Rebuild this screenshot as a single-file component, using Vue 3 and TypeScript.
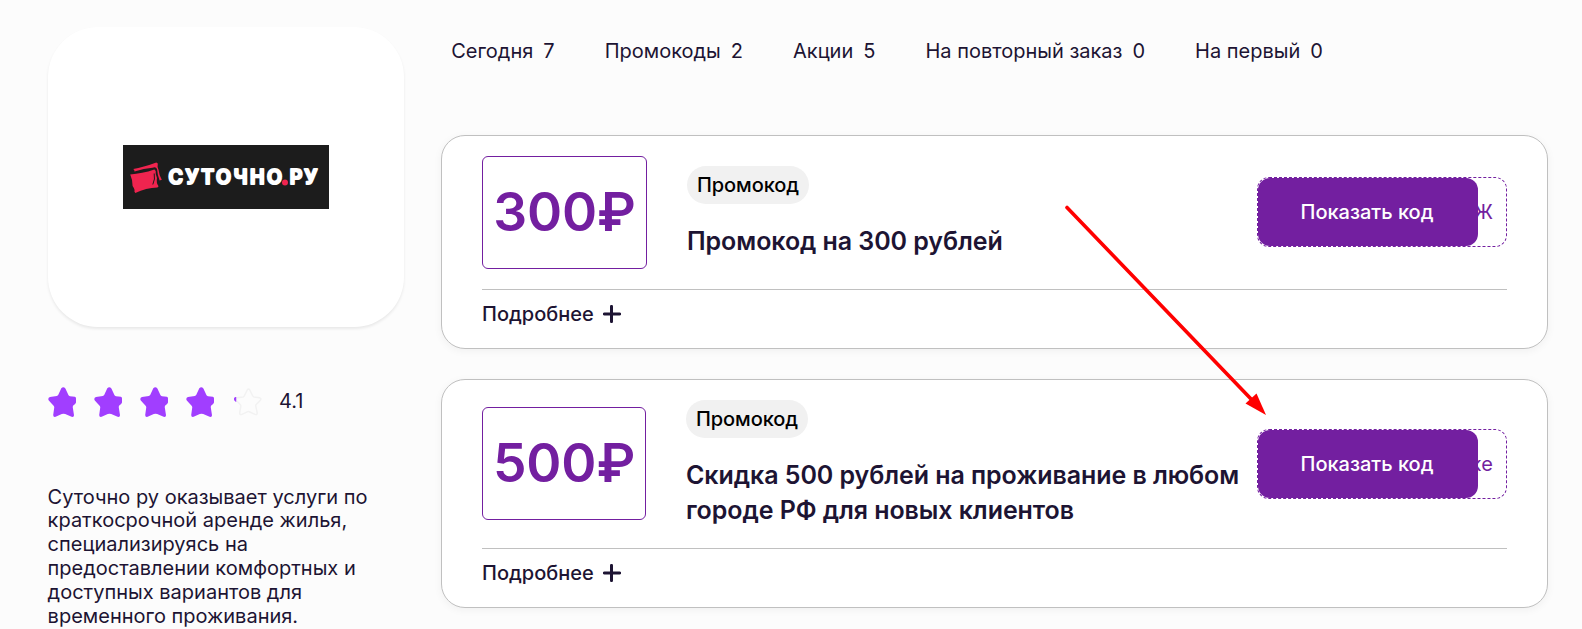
<script setup lang="ts">
interface Filter {
  label: string
  count: number
}
interface Coupon {
  value: string
  title: string
  code: string
  long?: boolean
}

const filters: Filter[] = [
  { label: 'Сегодня', count: 7 },
  { label: 'Промокоды', count: 2 },
  { label: 'Акции', count: 5 },
  { label: 'На повторный заказ', count: 0 },
  { label: 'На первый', count: 0 },
]

const coupons: Coupon[] = [
  { value: '300₽', title: 'Промокод на 300 рублей', code: 'Ж' },
  { value: '500₽', title: 'Скидка 500 рублей на проживание в любом городе РФ для новых клиентов', code: 'же', long: true },
]

const starPath =
  'M13.3 1.2Q15.5-1 17.4 1.6L20.4 8Q20.8 9 22 9.2L26.8 9.8Q28 10 28 11.5V15.5Q27.5 17 25.5 18.3Q24.6 19.2 24.8 20.5L26 28.2Q26 30.4 23.6 29.8L17.2 27Q15.5 26.3 13.8 27L7.6 29.8Q5.2 30.4 5.2 28L6.2 20.8Q6.4 19.6 5.6 18.7L.8 13.6Q-.6 11 2 10L8.8 9Q9.8 8.8 10.3 7.8Z'
</script>

<template>
  <div class="page">
    <aside class="side">
      <div class="logo-card">
        <div class="logo">
          <svg class="pillow" width="33" height="32" viewBox="0 0 33 32">
            <g fill="#f0244f">
              <path d="M3.2 7Q13 5.6 26.3.6L27.8 1.5Q27 4.5 28.6 8Q29.2 14 31.8 17.8L29.6 18.5Q27.5 13 27 7Q26 4.5 22.5 5.8Q14 6.6 4.5 9.4Q4.6 8 3.2 7Z" />
              <path d="M.2 12.5Q12 11.8 24.4 7.6L25.7 9Q25.2 12 27 16Q26 21 28.6 24.2L27.5 25.5Q16 25.6 5.3 31L4.4 29.6Q5.2 27.5 2.6 24Q2.4 17 .2 12.5Z" />
            </g>
            <path d="M24.2 11.5Q25.4 17 22.8 22.5" fill="none" stroke="#1c1c1c" stroke-width="1" />
          </svg>
          <svg class="wordmark" width="152" height="24" viewBox="0 0 152 24">
            <text x="0.5" y="19" textLength="113.5" lengthAdjust="spacing">СУТОЧНО</text>
            <circle cx="117" cy="17.4" r="3" fill="#f0244f" />
            <text x="121.8" y="19" textLength="27.5" lengthAdjust="spacing">РУ</text>
          </svg>
        </div>
      </div>

      <div class="rating">
        <svg v-for="n in 4" :key="n" class="star" width="28" height="30" viewBox="0 0 28 30">
          <path :d="starPath" fill="#a13eff" />
        </svg>
        <svg class="star empty" width="28" height="30" viewBox="0 0 28 30">
          <path d="M2.2 10.1V15Q0 13.8 0 11.8Q.4 10.4 2.2 10.1Z" fill="#a13eff" />
          <path
            d="M13.2 3Q14.5 1 15.8 3L18.8 9Q19.2 9.7 20 9.9L25.4 10.7Q28 11.5 26.1 13.5L22 17.8Q21.6 18.4 21.8 19.2L23.2 25.8Q23.3 28.3 21 27.4L15.3 24.7Q14.5 24.3 13.7 24.7L8 27.4Q5.4 28 5.7 25.7L6.8 19.3Q7 18.4 6.4 17.7L2.6 13.7Q.8 11.5 3.4 10.8L9 10Q9.8 9.8 10.2 9Z"
            fill="none" stroke="#f2f2f2" stroke-width="1.5"
          />
          <path d="M2.2 10.1V15Q0 13.8 0 11.8Q.4 10.4 2.2 10.1Z" fill="#a13eff" />
        </svg>
        <span class="score">4.1</span>
      </div>

      <p class="about">
        Суточно ру оказывает услуги по краткосрочной аренде жилья, специализируясь на предоставлении комфортных и
        доступных вариантов для временного проживания.
      </p>
    </aside>

    <main class="main">
      <nav class="filters">
        <a v-for="f in filters" :key="f.label" class="filter">
          <span>{{ f.label }}</span><span>{{ f.count }}</span>
        </a>
      </nav>

      <article v-for="c in coupons" :key="c.value" class="coupon">
        <div class="body">
          <div class="value" :class="{ narrow: c.long }">{{ c.value }}</div>
          <div class="info">
            <span class="badge">Промокод</span>
            <h3 class="title">{{ c.title }}</h3>
          </div>
          <div class="code">
            <button class="show">Показать код</button>
            <span class="code-text">{{ c.code }}</span>
          </div>
        </div>
        <div class="more">
          <span>Подробнее</span>
          <svg class="plus" width="18" height="18" viewBox="0 0 18 18">
            <path d="M8.5 1.4V16.6M1.4 9H16.6" stroke="#1d1433" stroke-width="3" stroke-linecap="round" />
          </svg>
        </div>
      </article>
    </main>

    <svg class="arrow" width="202" height="210" viewBox="0 0 202 210">
      <path d="M2 2.5L187 195" stroke="#f00" stroke-width="3.6" stroke-linecap="round" />
      <path d="M201 210L180.5 198.5L191.5 188.5Z" fill="#f00" />
    </svg>
  </div>
</template>

<style>
body {
  margin: 0;
  background: #fcfcfc;
}
</style>

<style scoped>
.page {
  position: relative;
  display: flex;
  box-sizing: border-box;
  width: 1582px;
  height: 629px;
  padding: 27px 34px 0 48px;
  overflow: hidden;
  background: #fcfcfc;
  color: #1d1433;
  font-family: Inter, "Liberation Sans", sans-serif;
  font-size: 20px;
  line-height: 24px;
}
.side {
  flex: none;
  width: 356px;
  margin-right: 37px;
}
.logo-card {
  display: flex;
  align-items: center;
  justify-content: center;
  height: 300px;
  border-radius: 50px;
  background: #fff;
  box-shadow: 0 2px 3px rgba(0, 0, 0, 0.08);
}
.logo {
  display: flex;
  align-items: center;
  box-sizing: border-box;
  width: 206px;
  height: 64px;
  padding-left: 7px;
  background: #1c1c1c;
}
.pillow {
  flex: none;
  margin: 1px 5px 0 0;
}
.wordmark {
  flex: none;
  overflow: visible;
}
.wordmark text {
  fill: #fff;
  stroke: #fff;
  stroke-width: 2.2px;
  stroke-linejoin: round;
  font-family: Inter, sans-serif;
  font-size: 19.5px;
  font-weight: 600;
}
.rating {
  display: flex;
  align-items: center;
  height: 30px;
  margin: 60px 0 0 -0.5px;
}
.star {
  flex: none;
  margin-right: 18px;
}
.star.empty {
  margin: 0 16px 0 2px;
}
.score {
  margin: -3px 0 0 1.5px;
}
.about {
  width: 335px;
  margin: 68.6px 0 0 -0.4px;
  line-height: 23.85px;
}
.main {
  flex: 1;
  min-width: 0;
}
.filters {
  display: flex;
  gap: 50px;
  height: 48px;
  margin-bottom: 60px;
  padding-left: 10.2px;
  line-height: 48px;
}
.filter {
  display: flex;
  gap: 10px;
  white-space: nowrap;
}
.coupon {
  box-sizing: border-box;
  margin-bottom: 30px;
  padding: 20px 40px 0;
  border: 1px solid #c0c0c0;
  border-radius: 24px;
  background: #fff;
  box-shadow: 0 2px 8px rgba(0, 0, 0, 0.05);
}
.body {
  display: flex;
  align-items: center;
  padding-bottom: 20px;
  border-bottom: 1px solid #c0c0c0;
}
.value {
  display: flex;
  flex: none;
  justify-content: center;
  box-sizing: border-box;
  width: 165px;
  height: 113px;
  margin: -0.25px 0 0.25px;
  border: 1px solid #731fa0;
  border-radius: 6px;
  color: #731fa0;
  font-size: 53.3px;
  font-weight: 600;
  line-height: 109px;
  letter-spacing: -0.1px;
}
.value.narrow {
  width: 164px;
}
.info {
  flex: 1;
  min-width: 0;
  margin-left: 40px;
}
.badge {
  display: block;
  width: max-content;
  padding: 0 10px;
  border-radius: 19px;
  background: #f1f1f1;
  color: #000;
  font-weight: 500;
  line-height: 38px;
  letter-spacing: -0.08px;
}
.title {
  margin: 20px 0 0;
  font-size: 25px;
  font-weight: 600;
  line-height: 35px;
  letter-spacing: -0.07px;
}
.code {
  position: relative;
  display: flex;
  flex: none;
  align-items: center;
  justify-content: flex-end;
  box-sizing: border-box;
  width: 250px;
  height: 70px;
  margin-bottom: 0.5px;
  padding-right: 13px;
  border: 1px dashed #731fa0;
  border-radius: 12px;
  color: #731fa0;
}
.show {
  position: absolute;
  top: 0;
  left: 0;
  width: 220px;
  height: 68px;
  padding: 0 2px 0 0;
  border: 0;
  border-radius: 12px;
  background: #731fa0;
  color: #fff;
  font: 500 20px Inter, sans-serif;
}
.more {
  display: flex;
  gap: 9px;
  align-items: center;
  height: 48px;
  padding-bottom: 10px;
  font-weight: 500;
}
.plus {
  margin-top: -1px;
}
.arrow {
  position: absolute;
  top: 205px;
  left: 1065px;
}
</style>
